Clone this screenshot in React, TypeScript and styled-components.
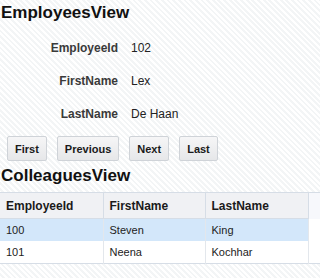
import styled, { createGlobalStyle } from 'styled-components';

const GlobalStyle = createGlobalStyle`
    html, body {
        margin: 0;
        padding: 0;
    }
    body {
        font-family: "Liberation Sans", Arial, sans-serif;
        color: #222;
        background: repeating-linear-gradient(45deg, #ffffff 0px, #ffffff 2px, #f3f5f6 2px, #f3f5f6 4px);
        width: 320px;
        height: 278px;
        overflow: hidden;
    }
`;

const Page = styled.div`
    display: flex;
    flex-direction: column;
`;

const Title = styled.h1`
    margin: 0;
    padding: 3px 0 0 1px;
    font-size: 17px;
    line-height: 20px;
    font-weight: bold;
    color: #111;
`;

const Form = styled.div`
    display: grid;
    grid-template-columns: 118px auto;
    column-gap: 13px;
    row-gap: 17px;
    margin-top: 17px;
`;

const Label = styled.div`
    text-align: right;
    font-size: 12px;
    line-height: 16px;
    font-weight: bold;
    color: #3a3a3a;
`;

const Value = styled.div`
    font-size: 12px;
    line-height: 16px;
    color: #222;
`;

const Toolbar = styled.div`
    display: flex;
    gap: 10px;
    padding: 14px 0 0 7px;
`;

const Button = styled.button`
    height: 25px;
    padding: 0 7px;
    font-family: inherit;
    font-size: 11px;
    font-weight: bold;
    color: #1a1a1a;
    background: linear-gradient(#f6f6f7, #e6e7e9);
    border: 1px solid #cfd3d8;
    border-radius: 2px;
`;

const SubTitle = styled(Title)`
    padding-top: 5px;
`;

const Table = styled.table`
    margin-top: 6px;
    width: 320px;
    border-collapse: collapse;
    table-layout: fixed;
    font-size: 11px;
    background: #fff;
    border-top: 1px solid #d6dde6;
    border-bottom: 1px solid #d6dde6;
`;

const Th = styled.th`
    height: 25px;
    padding: 0 6px;
    text-align: left;
    font-size: 12px;
    font-weight: bold;
    color: #1a1a1a;
    background: #f0f1f4;
    border-right: 1px solid #d6dde6;
    border-bottom: 1px solid #d6dde6;
`;

const Filler = styled.td`
    background: #f7f8fc;
    border-left: 1px solid #d6dde6;
`;

const Row = styled.tr<{ $selected?: boolean }>`
    background: ${(p) => (p.$selected ? '#d3e7fa' : '#fff')};
`;

const Td = styled.td`
    height: 22px;
    padding: 0 6px;
    color: #222;
    border-right: 1px solid #e3e7ec;
`;

const fields = [
    { label: 'EmployeeId', value: '102' },
    { label: 'FirstName', value: 'Lex' },
    { label: 'LastName', value: 'De Haan' },
];

const colleagues = [
    { id: '100', first: 'Steven', last: 'King' },
    { id: '101', first: 'Neena', last: 'Kochhar' },
];

function App() {
    return (
        <Page>
            <GlobalStyle />
            <Title>EmployeesView</Title>
            <Form>
                {fields.map((f) => [
                    <Label key={f.label}>{f.label}</Label>,
                    <Value key={f.label + '-value'}>{f.value}</Value>,
                ])}
            </Form>
            <Toolbar>
                <Button>First</Button>
                <Button>Previous</Button>
                <Button>Next</Button>
                <Button>Last</Button>
            </Toolbar>
            <SubTitle>ColleaguesView</SubTitle>
            <Table>
                <colgroup>
                    <col style={{ width: 103 }} />
                    <col style={{ width: 102 }} />
                    <col style={{ width: 103 }} />
                    <col />
                </colgroup>
                <thead>
                    <tr>
                        <Th>EmployeeId</Th>
                        <Th>FirstName</Th>
                        <Th>LastName</Th>
                        <Filler rowSpan={3} />
                    </tr>
                </thead>
                <tbody>
                    {colleagues.map((c, i) => (
                        <Row key={c.id} $selected={i === 0}>
                            <Td>{c.id}</Td>
                            <Td>{c.first}</Td>
                            <Td>{c.last}</Td>
                        </Row>
                    ))}
                </tbody>
            </Table>
        </Page>
    );
}

export default App;
